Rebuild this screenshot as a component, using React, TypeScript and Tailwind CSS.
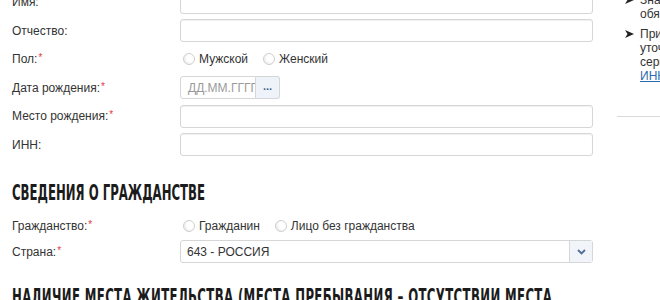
import React from "react";

const Req = () => <span className="text-[#e4393c] text-[10px] align-top ml-[1px]">*</span>;

const Label = ({ children, req }: { children: React.ReactNode; req?: boolean }) => (
  <div className="w-[168px] shrink-0 text-[12px] text-[#333]">
    {children}
    {req && <Req />}
  </div>
);

const Input = () => (
  <div className="w-[413px] h-[23px] border border-[#d6d6d6] rounded-[3px] bg-white shadow-[inset_0_1px_1px_rgba(0,0,0,0.06)]" />
);

const Radio = ({ label }: { label: string }) => (
  <div className="flex items-center mr-[12px]">
    <span className="w-[12px] h-[12px] rounded-full border border-[#cfcfcf] bg-[radial-gradient(circle_at_70%_40%,#ffffff_40%,#e2e2e2_100%)] mr-[4px] ml-[3px]" />
    <span className="text-[12px] text-[#333]">{label}</span>
  </div>
);

const Row = ({ children, className = "" }: { children: React.ReactNode; className?: string }) => (
  <div className={`flex items-center h-[23px] ${className}`}>{children}</div>
);

const Bullet = () => (
  <svg width="9" height="8" viewBox="0 0 9 8" className="absolute left-0 top-[3px]">
    <path d="M0 0 L9 4 L0 8 L2.5 4 Z" fill="#222" />
  </svg>
);

const headingFont = { fontFamily: "'Liberation Sans Narrow', 'DejaVu Sans Condensed', sans-serif" };

export default function App() {
  return (
    <div
      className="w-[660px] h-[300px] overflow-hidden bg-white flex"
      style={{ fontFamily: "'Liberation Sans', Arial, sans-serif" }}
    >
      <div className="w-[605px] shrink-0 pl-[12px]">
        <div className="flex flex-col gap-[5.5px] mt-[-9.5px]">
          <Row>
            <Label>Имя:</Label>
            <Input />
          </Row>
          <Row>
            <Label>Отчество:</Label>
            <Input />
          </Row>
          <Row>
            <Label req>Пол:</Label>
            <Radio label="Мужской" />
            <Radio label="Женский" />
          </Row>
          <Row>
            <Label req>Дата рождения:</Label>
            <div className="flex h-[23px]">
              <div className="w-[76px] h-[23px] border border-[#d6d6d6] rounded-l-[3px] flex items-center pl-[7px] overflow-hidden text-[12px] text-[#9a9a9a] whitespace-nowrap">
                ДД.ММ.ГГГГ
              </div>
              <div className="w-[24px] h-[23px] border border-l-0 border-[#d6d6d6] rounded-r-[3px] bg-[#edf3f9] flex items-center justify-center text-[#3d5f8a] text-[11px] font-bold leading-none pb-[2px]">
                ...
              </div>
            </div>
          </Row>
          <Row>
            <Label req>Место рождения:</Label>
            <Input />
          </Row>
          <Row>
            <Label>ИНН:</Label>
            <Input />
          </Row>
        </div>

        <h2
          className="mt-[25px] text-[21px] leading-[24px] font-bold text-[#1b1b1b] whitespace-nowrap scale-x-[0.62] origin-left"
          style={headingFont}
        >
          СВЕДЕНИЯ О ГРАЖДАНСТВЕ
        </h2>

        <div className="flex flex-col gap-[3px] mt-[9px]">
          <Row>
            <Label req>Гражданство:</Label>
            <Radio label="Гражданин" />
            <Radio label="Лицо без гражданства" />
          </Row>
          <Row>
            <Label req>Страна:</Label>
            <div className="w-[413px] h-[23px] border border-[#d6d6d6] rounded-[3px] flex">
              <div className="flex-1 flex items-center pl-[6px] text-[12px] text-[#333]">643 - РОССИЯ</div>
              <div className="w-[23px] border-l border-[#d6d6d6] bg-[#f1f5fa] flex items-center justify-center">
                <svg width="9" height="6" viewBox="0 0 9 6">
                  <path d="M1 1 L4.5 4.5 L8 1" stroke="#4f6f95" strokeWidth="1.8" fill="none" />
                </svg>
              </div>
            </div>
          </Row>
        </div>

        <h2
          className="mt-[22px] text-[21px] leading-[24px] font-bold text-[#1b1b1b] whitespace-nowrap scale-x-[0.62] origin-left tracking-[0.6px]"
          style={headingFont}
        >
          НАЛИЧИЕ МЕСТА ЖИТЕЛЬСТВА (МЕСТА ПРЕБЫВАНИЯ – ОТСУТСТВИИ МЕСТА
        </h2>
      </div>

      <div className="w-[200px] shrink-0 ml-[12px] text-[12px] leading-[14px] text-[#333]">
        <div className="pl-[8px] mt-[-7px]">
          <div className="relative pl-[15px] whitespace-nowrap">
            <Bullet />
            <div>Знаком * отмечены поля,</div>
            <div>обязательные для заполнения</div>
          </div>
          <div className="relative pl-[15px] mt-[6px] whitespace-nowrap">
            <Bullet />
            <div>При необходимости</div>
            <div>уточнить ИНН воспользуйтесь</div>
            <div>сервисом</div>
            <div>
              <a className="text-[#2a6bb0] underline">ИНН физического лица</a>
            </div>
          </div>
        </div>
        <div className="mt-[33px] border-t border-[#d9d9d9] w-[200px]" />
      </div>
    </div>
  );
}
